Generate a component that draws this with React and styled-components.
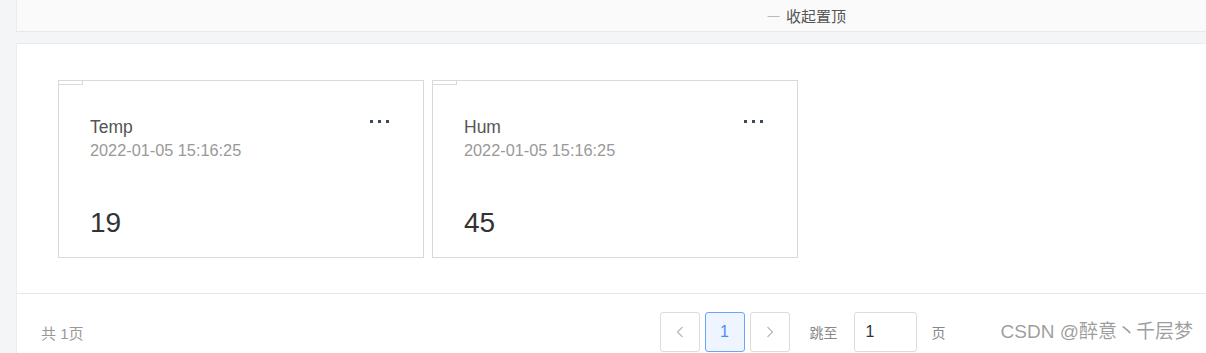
import React from "react";
import styled, { createGlobalStyle } from "styled-components";

const Global = createGlobalStyle`
  html, body { margin: 0; padding: 0; }
  body {
    background: #f4f5f7;
    font-family: "Liberation Sans", Arial, "Noto Sans CJK SC", sans-serif;
    overflow: hidden;
  }
`;

const Page = styled.div`
  position: relative;
  padding-left: 16px;
  height: 353px;
  display: flex;
  flex-direction: column;
  gap: 11px;
`;

const TopBar = styled.div`
  height: 31px;
  background: #fafafa;
  border-bottom: 1px solid #e9e9e9;
  border-left: 1px solid #ececec;
  display: flex;
  align-items: center;
  padding-left: 750px;
  font-size: 15px;
  color: #555;
`;

const Dash = styled.span`
  color: #bbb;
  font-size: 13px;
  margin-right: 6px;
`;

const Panel = styled.div`
  flex: 1;
  background: #fff;
  border-top: 1px solid #ebebeb;
  border-left: 1px solid #ececec;
  display: flex;
  flex-direction: column;
`;

const CardRow = styled.div`
  display: flex;
  gap: 8px;
  padding: 36px 0 35px 41px;
  border-bottom: 1px solid #e8e8e8;
`;

const Card = styled.div`
  position: relative;
  box-sizing: border-box;
  width: 366px;
  height: 178px;
  border: 1px solid #d9d9d9;
  padding: 34px 34px 0 31px;
  display: flex;
  flex-direction: column;
`;

const Tab = styled.div`
  position: absolute;
  left: -1px;
  top: -1px;
  width: 23px;
  height: 3px;
  border: 1px solid #d9d9d9;
`;

const Head = styled.div`
  display: flex;
  justify-content: space-between;
  align-items: flex-start;
`;

const Title = styled.div`
  font-size: 17.5px;
  line-height: 24px;
  color: #555;
`;

const DateText = styled.div`
  font-size: 16.3px;
  line-height: 22px;
  color: #999;
`;

const Dots = styled.div`
  display: flex;
  gap: 5px;
  padding-top: 5px;
`;

const Dot = styled.span`
  width: 3px;
  height: 3px;
  background: #3e4a5c;
`;

const Value = styled.div`
  margin-top: 42px;
  font-size: 28px;
  line-height: 40px;
  color: #333;
`;

const Footer = styled.div`
  display: flex;
  align-items: center;
  padding: 18px 0 0 24px;
  height: 40px;
`;

const Total = styled.div`
  font-size: 15px;
  color: #999;
`;

const Pager = styled.div`
  display: flex;
  align-items: center;
  margin-left: 576px;
`;

const PageBtn = styled.div`
  box-sizing: border-box;
  width: 40px;
  height: 40px;
  margin-right: ${(p) => (p.$last ? "0" : "5px")};
  border: 1px solid ${(p) => (p.$active ? "#6aa4fb" : "#dcdcdc")};
  background: ${(p) => (p.$active ? "#eef5ff" : "#fff")};
  color: ${(p) => (p.$active ? "#4a8cf7" : "#bbb")};
  border-radius: 3px;
  display: flex;
  align-items: center;
  justify-content: center;
  font-size: 16px;
`;

const Label = styled.span`
  font-size: 14px;
  color: #888;
  margin: 0 ${(p) => p.$mr}px 0 ${(p) => p.$ml}px;
`;

const Input = styled.div`
  box-sizing: border-box;
  width: 63px;
  height: 40px;
  border: 1px solid #dcdcdc;
  border-radius: 3px;
  padding-left: 11px;
  display: flex;
  align-items: center;
  font-size: 16px;
  color: #333;
`;

const Watermark = styled.div`
  position: absolute;
  right: 13px;
  bottom: 10px;
  font-size: 19px;
  color: rgba(120, 120, 120, 0.72);
  font-family: "Liberation Sans", Arial, "Noto Sans CJK SC", sans-serif;
`;

const Chevron = ({ dir }) => (
  <svg width="8" height="12" viewBox="0 0 8 12" fill="none">
    <path
      d={dir === "left" ? "M6.5 1 L1.5 6 L6.5 11" : "M1.5 1 L6.5 6 L1.5 11"}
      stroke="#bbb"
      strokeWidth="1.3"
    />
  </svg>
);

const cards = [
  { name: "Temp", date: "2022-01-05 15:16:25", value: "19" },
  { name: "Hum", date: "2022-01-05 15:16:25", value: "45" },
];

export default function App() {
  return (
    <>
      <Global />
      <Page>
        <TopBar>
          <Dash>一</Dash>收起置顶
        </TopBar>
        <Panel>
          <CardRow>
            {cards.map((c) => (
              <Card key={c.name}>
                <Tab />
                <Head>
                  <div>
                    <Title>{c.name}</Title>
                    <DateText>{c.date}</DateText>
                  </div>
                  <Dots>
                    <Dot />
                    <Dot />
                    <Dot />
                  </Dots>
                </Head>
                <Value>{c.value}</Value>
              </Card>
            ))}
          </CardRow>
          <Footer>
            <Total>共 1页</Total>
            <Pager>
              <PageBtn>
                <Chevron dir="left" />
              </PageBtn>
              <PageBtn $active>1</PageBtn>
              <PageBtn $last>
                <Chevron dir="right" />
              </PageBtn>
              <Label $ml={20} $mr={16}>跳至</Label>
              <Input>1</Input>
              <Label $ml={15} $mr={0}>页</Label>
            </Pager>
          </Footer>
        </Panel>
        <Watermark>CSDN @醉意丶千层梦</Watermark>
      </Page>
    </>
  );
}
